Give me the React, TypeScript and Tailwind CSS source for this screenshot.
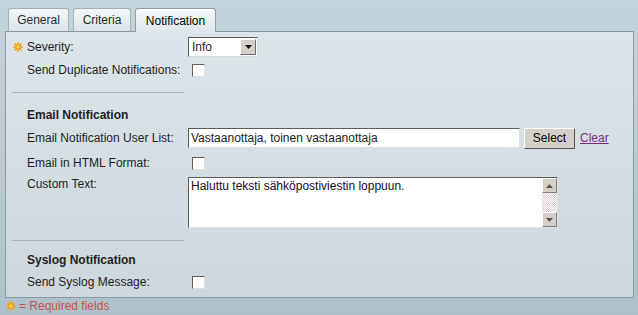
import React from "react";

const Star = () => (
  <svg width="10" height="10" viewBox="0 0 10 10" className="block">
    <g fill="#f2a31b">
      <circle cx="5" cy="5" r="3" />
      {[0, 45, 90, 135, 180, 225, 270, 315].map((a) => (
        <rect key={a} x="4.3" y="0" width="1.4" height="2.4" transform={`rotate(${a} 5 5)`} />
      ))}
    </g>
    <circle cx="5" cy="5" r="1.4" fill="#ffd75a" />
  </svg>
);

const Checkbox = () => (
  <div className="ml-[4px] w-[13px] h-[13px] bg-white border border-t-[#5f5f5f] border-l-[#5f5f5f] border-b-[#e0e0e0] border-r-[#e0e0e0]" />
);

const ArrowBtn = ({ up }: { up?: boolean }) => (
  <div className="w-[15px] h-[15px] bg-[#d4d0c8] border border-t-white border-l-white border-b-[#808080] border-r-[#808080] flex items-center justify-center">
    <svg width="7" height="4" viewBox="0 0 7 4">
      <path d={up ? "M0 4 L3.5 0 L7 4 Z" : "M0 0 L7 0 L3.5 4 Z"} fill="#555" />
    </svg>
  </div>
);

export default function App() {
  const font = { fontFamily: '"Liberation Sans", Arial, sans-serif' };
  return (
    <div
      style={font}
      className="w-[638px] h-[315px] bg-gradient-to-b from-[#c4d4dc] to-[#aec1ca] text-[12px] text-[#1e1e1e] flex flex-col overflow-hidden"
    >
      {/* Tabs */}
      <div className="flex items-end pl-[8px] pt-[8px] h-[31px] gap-[4px]">
        <div className="w-[61px] h-[23px] rounded-t-[3px] border border-b-0 border-[#9fb0b8] bg-gradient-to-b from-[#f4f7f8] to-[#dbe4e9] flex items-center justify-center text-[#2a2a2a]">
          General
        </div>
        <div className="w-[58px] h-[23px] rounded-t-[3px] border border-b-0 border-[#9fb0b8] bg-gradient-to-b from-[#f4f7f8] to-[#dbe4e9] flex items-center justify-center text-[#2a2a2a]">
          Criteria
        </div>
        <div className="relative z-10 w-[81px] h-[24px] -mb-[1px] rounded-t-[3px] border border-b-0 border-[#8d9ea7] bg-gradient-to-b from-[#f7f9fa] to-[#dde6eb] flex items-center justify-center text-black">
          Notification
        </div>
      </div>

      {/* Panel */}
      <div className="ml-[5px] w-[629px] h-[267px] border border-[#8a9aa3] bg-gradient-to-b from-[#dbe5ea] to-[#ccd8de] flex flex-col pt-[4px]">
        {/* Severity */}
        <div className="flex items-center h-[22px]">
          <div className="w-[21px] pl-[7px]">
            <Star />
          </div>
          <div className="w-[161px]">Severity:</div>
          <div className="w-[70px] h-[20px] bg-white border border-t-[#5a5a5a] border-l-[#5a5a5a] border-b-[#d8d8d8] border-r-[#d8d8d8] flex items-center justify-between pl-[3px] pr-[1px]">
            <span>Info</span>
            <div className="w-[16px] h-[16px] bg-[#d4d0c8] border border-t-white border-l-white border-b-[#6b6b6b] border-r-[#6b6b6b] flex items-center justify-center">
              <svg width="7" height="4" viewBox="0 0 7 4">
                <path d="M0 0 L7 0 L3.5 4 Z" fill="#111" />
              </svg>
            </div>
          </div>
        </div>

        {/* Duplicate */}
        <div className="flex items-center h-[24px]">
          <div className="w-[21px]" />
          <div className="w-[161px]">Send Duplicate Notifications:</div>
          <Checkbox />
        </div>

        <div className="ml-[6px] w-[172px] h-px bg-[#aab6bd] mt-[10px]" />

        {/* Email header */}
        <div className="flex items-center h-[22px] mt-[11px] pl-[21px] font-bold text-[#222]">
          Email Notification
        </div>

        {/* User list */}
        <div className="flex items-center h-[22px] mt-[1px]">
          <div className="w-[21px]" />
          <div className="w-[161px]">Email Notification User List:</div>
          <div className="w-[332px] h-[20px] bg-white border border-t-[#5a5a5a] border-l-[#5a5a5a] border-b-[#e0e0e0] border-r-[#e0e0e0] flex items-center pl-[2px]">
            Vastaanottaja, toinen vastaanottaja
          </div>
          <div className="ml-[4px] w-[51px] h-[21px] bg-[#d4d0c8] border border-t-white border-l-white border-b-[#555] border-r-[#555] flex items-center justify-center text-black">
            Select
          </div>
          <a className="ml-[5px] text-[#7b2c7b] underline">Clear</a>
        </div>

        {/* HTML */}
        <div className="flex items-center h-[24px] mt-[2px]">
          <div className="w-[21px]" />
          <div className="w-[161px]">Email in HTML Format:</div>
          <Checkbox />
        </div>

        {/* Custom text */}
        <div className="flex items-start h-[51px] mt-[2px]">
          <div className="w-[21px]" />
          <div className="w-[161px] pt-[0px] leading-[14px]">Custom Text:</div>
          <div className="w-[370px] h-[51px] bg-white border border-t-[#5a5a5a] border-l-[#5a5a5a] border-b-[#e0e0e0] border-r-[#e0e0e0] flex">
            <div className="flex-1 pl-[2px] pt-[1px] leading-[14px] text-[#1a0a1a]">
              Haluttu teksti sähköpostiviestin loppuun.
            </div>
            <div className="w-[15px] flex flex-col bg-[repeating-conic-gradient(#d4d0c8_0%_25%,#ffffff_0%_50%)] bg-[length:2px_2px]">
              <ArrowBtn up />
              <div className="flex-1" />
              <ArrowBtn />
            </div>
          </div>
        </div>

        <div className="ml-[6px] w-[172px] h-px bg-[#aab6bd] mt-[12px]" />

        {/* Syslog header */}
        <div className="flex items-center h-[22px] mt-[8px] pl-[21px] font-bold text-[#222]">
          Syslog Notification
        </div>

        <div className="flex items-center h-[22px]">
          <div className="w-[21px]" />
          <div className="w-[161px]">Send Syslog Message:</div>
          <Checkbox />
        </div>
      </div>

      {/* Required */}
      <div className="flex items-center h-[16px] pl-[6px] gap-[3px] text-[#c8524a]">
        <Star />
        <span>= Required fields</span>
      </div>
    </div>
  );
}
